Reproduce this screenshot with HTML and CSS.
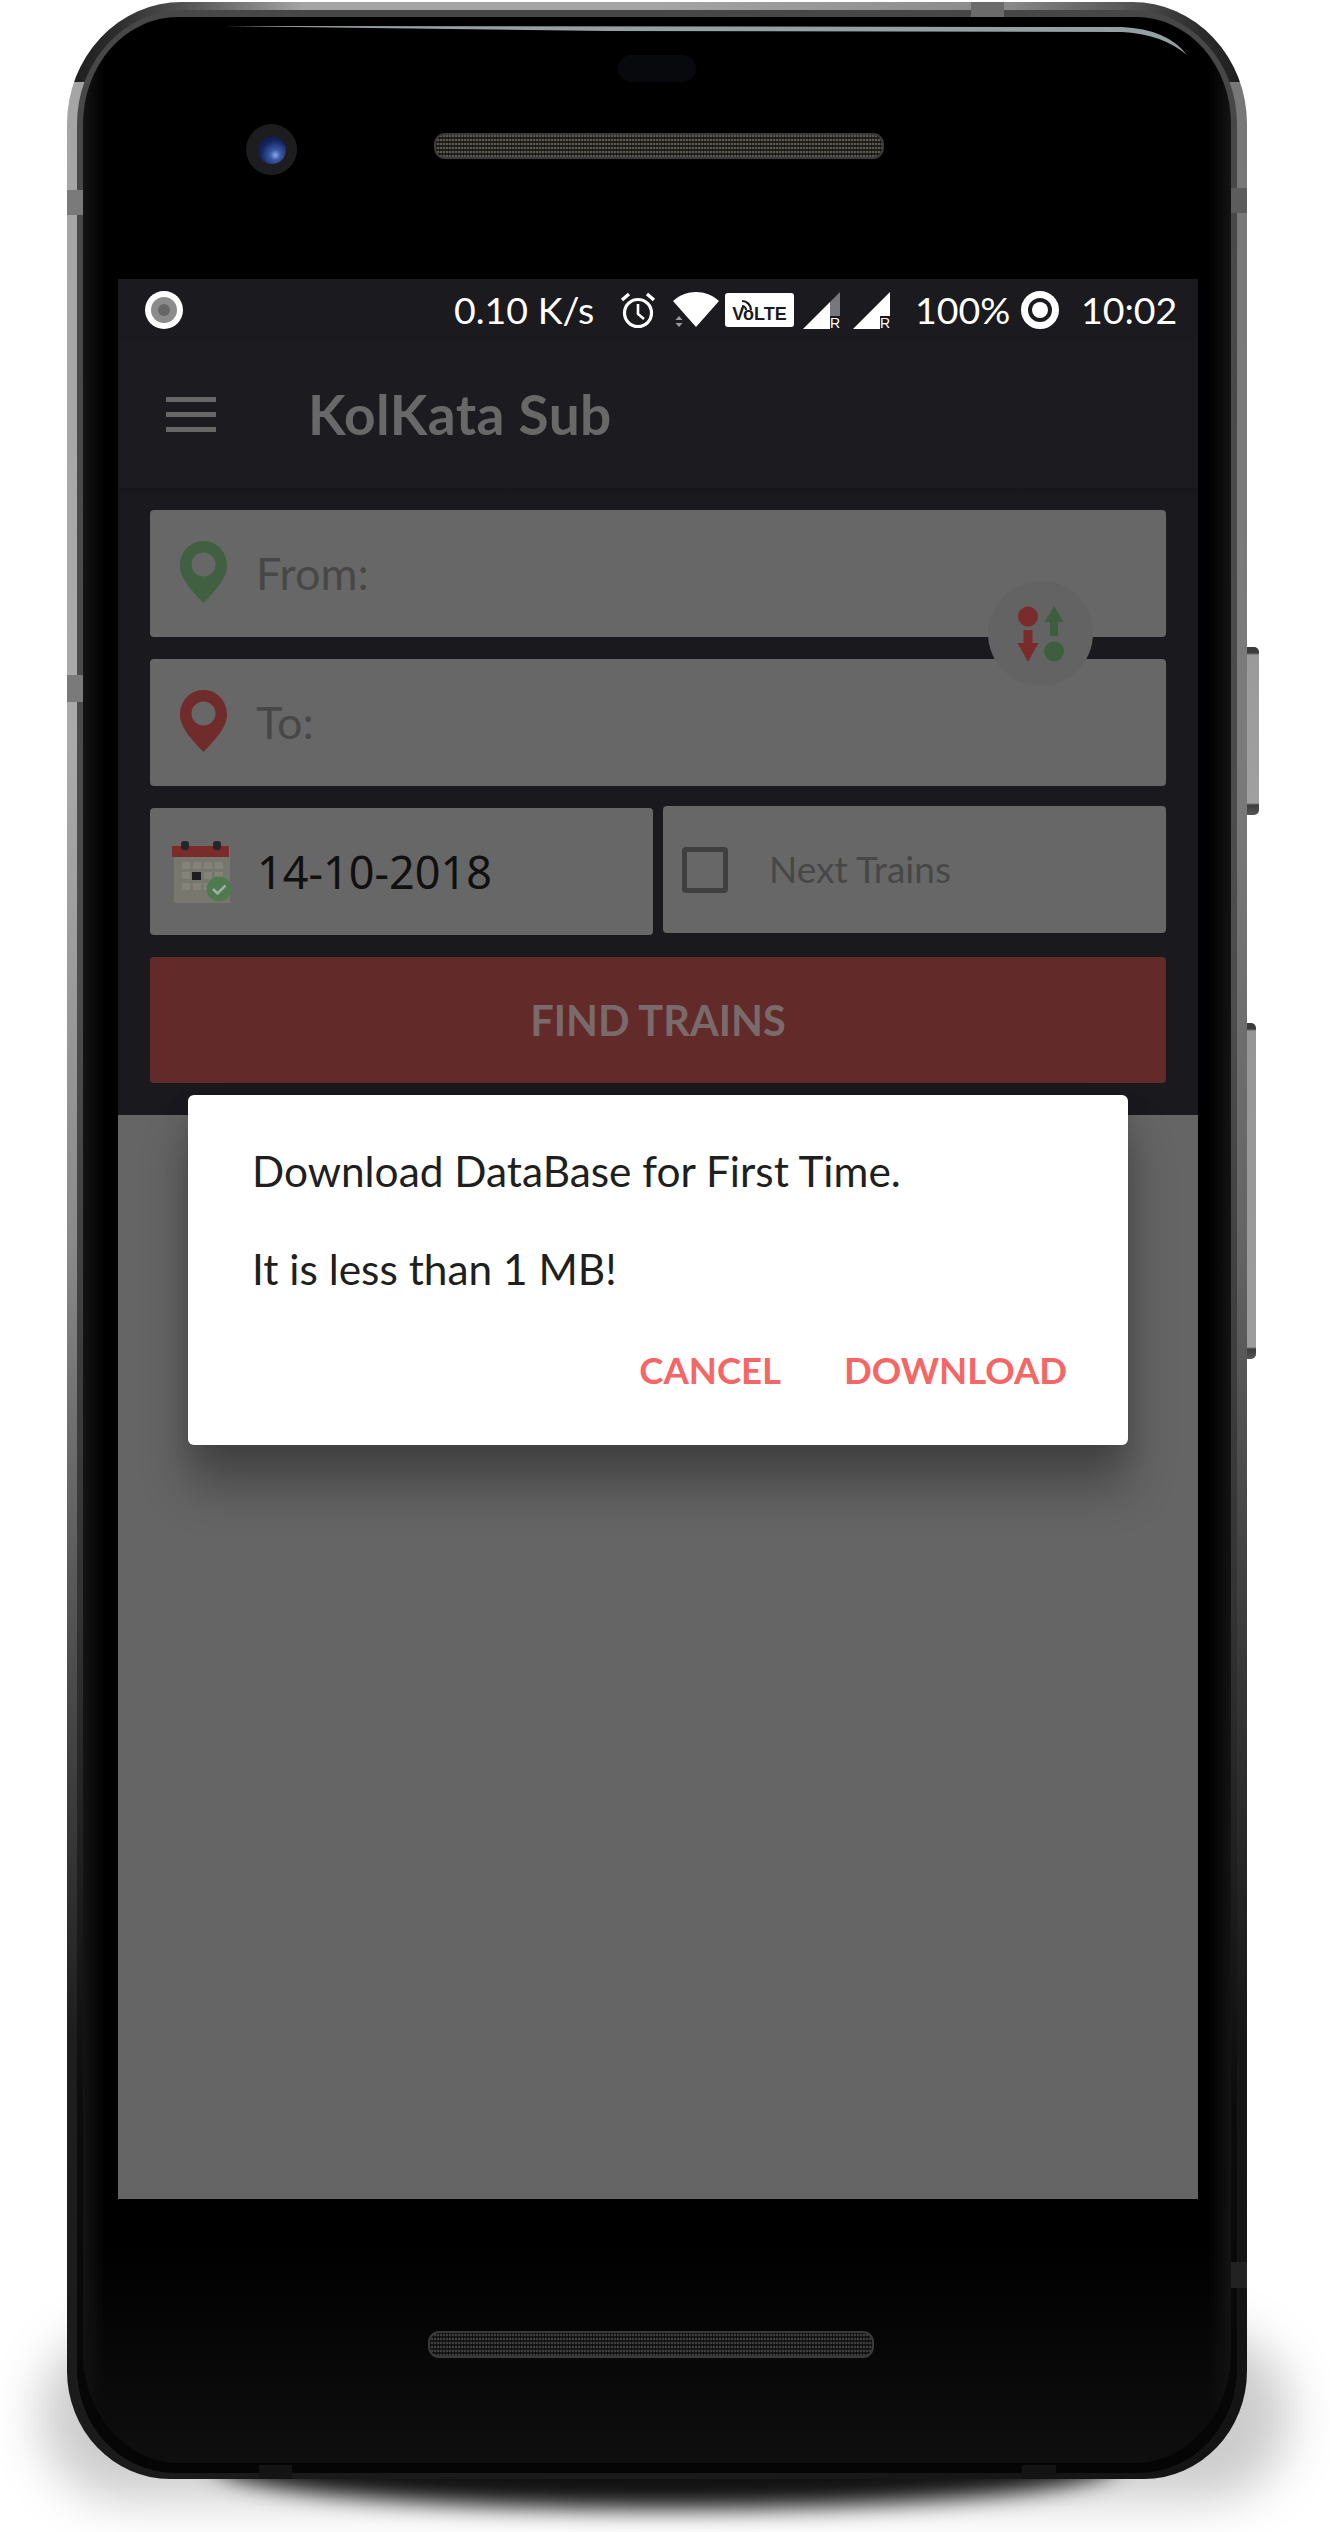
FILE: index.html
```html
<!DOCTYPE html>
<html lang="en">
<head>
<meta charset="utf-8">
<title>KolKata Sub</title>
<link rel="stylesheet" href="styles.css">
</head>
<body>
<div class="stage">
  <div class="halo"></div>
  <div class="floor-shadow"></div>
  <div class="side-key key-one"></div>
  <div class="side-key key-two"></div>
  <div class="phone">
    <div class="band">
      <div class="glass">
        <div class="top-bezel">
          <div class="sensor"></div>
          <div class="camera-row">
            <div class="camera"><div class="lens"></div></div>
            <div class="speaker speaker-top"></div>
          </div>
        </div>
        <div class="screen">
          <div class="status">
            <svg class="ico-record" viewBox="0 0 38 38"><circle cx="19" cy="19" r="19" fill="#fff"/><circle cx="19" cy="19" r="13" fill="#8b8b8b"/><circle cx="19" cy="19" r="6" fill="#666"/></svg>
            <span class="status-text speed">0.10 K/s</span>
            <svg class="ico-alarm" viewBox="0 0 36 37" fill="none" stroke="#fff"><circle cx="18" cy="21" r="13.5" stroke-width="3.2"/><path d="M18 12v10l6 5" stroke-width="2.6"/><path d="M2 8 9 2M34 8 27 2" stroke-width="3.4"/></svg>
            <svg class="ico-wifi" viewBox="0 0 46 36"><path d="M0 9C13-3 33-3 46 9L23 35Z" fill="#fff"/><path d="M6 24l-3.500 4h7ZM6 35l-3.500-4h7Z" fill="#9a9a9f"/></svg>
            <div class="volte">
              <span class="volte-text">VoLTE</span>
              <svg class="volte-waves" viewBox="0 0 14 14"><path d="M2 9a4 4 0 0 1 4 4M2 4a9 9 0 0 1 9 9" fill="none" stroke="#1a1a1f" stroke-width="2.200"/></svg>
            </div>
            <div class="signal">
              <svg class="signal-shape" viewBox="0 0 37 37"><path d="M0 37 27 10V37Z" fill="#fff"/><path d="M27 10 37 0V24H27Z" fill="#77777d"/></svg>
              <span class="sig-r">R</span>
            </div>
            <div class="signal sig-two">
              <svg class="signal-shape" viewBox="0 0 37 37"><path d="M0 37 37 0V24H27V37Z" fill="#fff"/></svg>
              <span class="sig-r">R</span>
            </div>
            <span class="status-text battery">100%</span>
            <svg class="ico-ring" viewBox="0 0 38 38"><circle cx="19" cy="19" r="15.500" fill="none" stroke="#fff" stroke-width="7"/><circle cx="19" cy="19" r="8" fill="#fff"/></svg>
            <span class="status-text clock">10:02</span>
          </div>
          <div class="appbar">
            <div class="burger"><span></span><span></span><span></span></div>
            <div class="title">KolKata Sub</div>
          </div>
          <div class="form">
            <div class="field">
              <svg class="pin" viewBox="0 0 47 62"><path fill-rule="evenodd" d="M23.500 0C36 0 47 10 47 25 47 38 33 52 23.500 62 14 52 0 38 0 25 0 10 11 0 23.500 0ZM23.500 11.500a12 12 0 1 0 0 24 12 12 0 0 0 0-24Z" fill="#415f41"/></svg>
              <span class="field-label">From:</span>
            </div>
            <div class="field">
              <svg class="pin" viewBox="0 0 47 62"><path fill-rule="evenodd" d="M23.500 0C36 0 47 10 47 25 47 38 33 52 23.500 62 14 52 0 38 0 25 0 10 11 0 23.500 0ZM23.500 11.500a12 12 0 1 0 0 24 12 12 0 0 0 0-24Z" fill="#702b2b"/></svg>
              <span class="field-label">To:</span>
            </div>
            <div class="row">
              <div class="field date">
                <svg class="calendar" viewBox="0 0 60 62">
                  <rect x="2" y="6" width="56" height="56" fill="#77776d"/>
                  <rect y="5" width="57" height="11" fill="#7a2b2b"/>
                  <rect x="9" y="0" width="8" height="9" rx="3" fill="#26262a"/>
                  <rect x="41" y="0" width="8" height="9" rx="3" fill="#26262a"/>
                  <g fill="#83837a">
                    <rect x="10" y="21" width="8" height="7"/><rect x="21" y="21" width="8" height="7"/><rect x="32" y="21" width="8" height="7"/><rect x="43" y="21" width="8" height="7"/>
                    <rect x="10" y="31" width="8" height="7"/><rect x="32" y="31" width="8" height="7"/><rect x="43" y="31" width="8" height="7"/>
                    <rect x="10" y="42" width="8" height="7"/><rect x="21" y="42" width="8" height="7"/><rect x="32" y="42" width="8" height="7"/>
                  </g>
                  <rect x="20" y="31" width="9" height="8" fill="#1d1d20"/>
                  <circle cx="47" cy="48" r="12.500" fill="#4f7a50"/>
                  <path d="M41 48l4.500 4.500 8-8" fill="none" stroke="#9db09d" stroke-width="2.500"/>
                </svg>
                <span class="date-text">14-10-2018</span>
              </div>
              <div class="field next">
                <span class="check"></span>
                <span class="next-label">Next Trains</span>
              </div>
            </div>
            <div class="find">FIND TRAINS</div>
          </div>
          <div class="content"></div>
          <div class="swap">
            <svg viewBox="0 0 46 56">
              <circle cx="10" cy="10.500" r="10" fill="#7a2b2b"/>
              <path d="M5.500 24h9v13h6L10 56-.5 37h6Z" fill="#7a2b2b"/>
              <circle cx="36" cy="45.500" r="10" fill="#3d5f3d"/>
              <path d="M36 0l9.500 16H40v14h-8V16h-5.500Z" fill="#3d5f3d"/>
            </svg>
          </div>
          <div class="dialog">
            <p class="msg">Download DataBase for First Time.</p>
            <p class="msg msg-second">It is less than 1 MB!</p>
            <div class="actions"><span class="action">CANCEL</span><span class="action">DOWNLOAD</span></div>
          </div>
        </div>
        <div class="bottom-bezel"><div class="speaker speaker-low"></div></div>
      </div>
    </div>
    <svg class="glint" viewBox="0 0 1180 80"><path d="M158 24 1055 25Q1100 27 1120 53 1095 32 1055 30L540 29Z" fill="#95a1a1"/></svg>
    <div class="notch notch-top"></div>
    <div class="notch notch-l1"></div>
    <div class="notch notch-l2"></div>
    <div class="notch notch-r1"></div>
    <div class="notch notch-r2"></div>
    <div class="notch notch-b1"></div>
    <div class="notch notch-b2"></div>
  </div>
</div>
</body>
</html>
```
FILE: styles.css
```css
* { box-sizing: border-box; }
html, body { margin: 0; padding: 0; background: #fff; }
body { width: 1330px; height: 2532px; overflow: hidden; font-family: "Lato", "Liberation Sans", sans-serif; }

.stage { position: relative; width: 1330px; height: 2532px; padding: 2px 0 0 67px; }

.phone {
  position: relative;
  width: 1180px;
  height: 2477px;
  padding: 8px 10px 6px 10px;
  border-radius: 115px 115px 103px 103px / 122px 122px 108px 108px;
  background:
    linear-gradient(90deg, #1c1c1c 0, #2c2c2c 4%, #5a5a5a 11%, transparent 20%, transparent 80%, #5a5a5a 89%, #2c2c2c 96%, #1c1c1c 100%) 0 0 / 100% 80px no-repeat,
    linear-gradient(90deg, transparent 50%, rgba(0,0,0,.28) 100%),
    linear-gradient(180deg, #a4a4a4 0, #aaa 30%, #8a8a8a 50%, #4a4a4a 68%, #1e1e1e 82%, #1a1a1a 100%);
}
.band {
  height: 100%;
  padding: 7px 6px 10px 6px;
  border-radius: 106px 106px 98px 98px / 114px 114px 104px 104px;
  background: linear-gradient(180deg, #474747 0, #4d4d4d 40%, #333 65%, #0c0c0c 85%, #050505 100%);
}
.glass {
  height: 100%;
  display: flex;
  flex-direction: column;
  overflow: hidden;
  border-radius: 95px 95px 96px 96px / 107px 107px 110px 110px;
  background:
    linear-gradient(180deg, transparent 91%, rgba(16,16,16,.9) 100%),
    linear-gradient(90deg, #141414 0, #000 22px, #000 calc(100% - 22px), #141414 100%);
}

.top-bezel { height: 262px; flex: none; display: flex; flex-direction: column; align-items: center; padding-top: 38px; }
.sensor { width: 78px; height: 27px; border-radius: 14px; background: #07090c; }
.camera-row { display: flex; align-items: center; gap: 137px; width: 100%; margin-top: 42px; padding-left: 163px; }
.camera { width: 51px; height: 51px; border-radius: 50%; background: #1d1d20; display: flex; align-items: center; justify-content: center; }
.lens { width: 28px; height: 28px; border-radius: 50%; background: radial-gradient(circle at 62% 68%, #8fa8e0 0, #3a5aa8 20%, #16265c 55%, #0a0f22 100%); }
.speaker {
  width: 450px;
  height: 26px;
  border-radius: 11px;
  border: 2px solid #3b3a37;
  background:
    repeating-linear-gradient(90deg, rgba(0,0,0,.45) 0 1px, transparent 1px 3px),
    repeating-linear-gradient(0deg, #57554d 0 2px, #24231f 2px 4px);
}
.speaker-top { margin-bottom: 8px; }

.screen { position: relative; width: 1080px; height: 1920px; margin-left: 35px; flex: none; display: flex; flex-direction: column; }

.status { height: 62px; flex: none; background: #1a1a1f; display: flex; align-items: center; color: #fff; padding-left: 27px; }
.status-text { font-weight: 400; font-size: 37.500px; line-height: 1; white-space: nowrap; }
.ico-record { width: 38px; height: 38px; flex: none; }
.speed { margin-left: 271px; width: 142px; }
.ico-alarm { width: 36px; height: 37px; margin-left: 24px; flex: none; }
.ico-wifi { width: 46px; height: 36px; margin-left: 17px; flex: none; }
.volte { position: relative; width: 69px; height: 34px; margin-left: 6px; flex: none; background: #fff; border-radius: 3px; display: flex; align-items: flex-end; justify-content: center; }
.volte-text { font-family: "Liberation Sans", sans-serif; font-weight: 700; font-size: 18px; line-height: 25px; color: #1a1a1f; }
.volte-waves { position: absolute; left: 15px; top: 4px; width: 14px; height: 14px; }
.signal { position: relative; width: 37px; height: 37px; margin-left: 9px; flex: none; }
.signal-shape { width: 37px; height: 37px; display: block; }
.sig-two { margin-left: 13px; }
.sig-r { position: absolute; right: 0; bottom: 0; font-family: "Liberation Sans", sans-serif; font-size: 14px; line-height: 12px; color: #fff; }
.battery { margin-left: 25px; width: 93px; }
.ico-ring { width: 38px; height: 38px; margin-left: 13px; flex: none; }
.clock { margin-left: 22px; }

.appbar { height: 147px; flex: none; background: #1b1b20; display: flex; align-items: center; padding-left: 48px; }
.burger { width: 50px; display: flex; flex-direction: column; gap: 10px; }
.burger span { display: block; height: 5px; background: #676767; }
.title { margin-left: 92px; font-weight: 700; font-size: 55px; letter-spacing: .4px; line-height: 1; color: #686868; white-space: nowrap; }

.form { height: 627px; flex: none; background: linear-gradient(180deg, #17171b 0, #19191e 8px); padding: 22px 32px 0; display: flex; flex-direction: column; gap: 22px; }
.field { height: 127px; flex: none; background: #676767; border-radius: 4px; display: flex; align-items: center; padding-left: 30px; }
.pin { width: 47px; height: 62px; flex: none; margin-bottom: 3px; }
.field-label { margin-left: 29px; font-size: 45px; line-height: 1; color: #474747; }
.row { display: flex; gap: 10px; align-items: flex-start; height: 127px; flex: none; }
.date { width: 503px; padding-left: 22px; }
.calendar { width: 60px; height: 62px; flex: none; }
.date-text { margin-left: 25px; font-family: "Noto Sans", sans-serif; font-size: 45px; line-height: 1; color: #101010; }
.next { flex: 1; margin-top: -2px; padding-left: 19px; }
.check { width: 46px; height: 46px; border: 5px solid #3f3f3f; border-radius: 4px; flex: none; }
.next-label { margin-left: 41px; margin-bottom: 3px; font-size: 37px; line-height: 1; color: #474747; }
.find { height: 126px; flex: none; background: #632a2a; border-radius: 4px; display: flex; align-items: center; justify-content: center; font-weight: 700; font-size: 41.500px; color: #7a6b6b; }

.content { flex: 1; background: #656565; }

.swap { position: absolute; left: 870px; top: 302px; width: 105px; height: 105px; border-radius: 50%; background: #636363; display: flex; align-items: center; justify-content: center; }
.swap svg { width: 46px; height: 56px; overflow: visible; }

.dialog {
  position: absolute;
  left: 70px;
  top: 816px;
  width: 940px;
  height: 350px;
  background: #fff;
  border-radius: 6px;
  padding: 0 61px 0 64px;
  box-shadow: 0 42px 48px rgba(0,0,0,.3), 0 10px 26px rgba(0,0,0,.12);
  display: flex;
  flex-direction: column;
}
.msg { margin: 53px 0 0; font-size: 42.400px; line-height: 46px; color: #1f1f1f; white-space: nowrap; }
.msg-second { margin-top: 52px; }
.actions { display: flex; justify-content: flex-end; gap: 63px; margin-top: 55px; }
.action { font-weight: 700; font-size: 36.500px; line-height: 46px; color: #f56667; white-space: nowrap; }

.bottom-bezel { flex: 1; padding: 132px 0 0 345px; }
.speaker-low { width: 446px; height: 27px; border-color: #3a3a3a; background: repeating-linear-gradient(90deg, rgba(0,0,0,.5) 0 1px, transparent 1px 3px), repeating-linear-gradient(0deg, #3c3c3c 0 2px, #191919 2px 4px); }

.glint { position: absolute; left: 0; top: 0; width: 1180px; height: 80px; }

.notch { position: absolute; }
.notch-top { left: 904px; top: 0; width: 33px; height: 15px; background: #6b6b6b; }
.notch-l1 { left: 0; top: 188px; width: 16px; height: 25px; background: #7a7a7a; }
.notch-l2 { left: 0; top: 673px; width: 16px; height: 27px; background: #7a7a7a; }
.notch-r1 { right: 0; top: 186px; width: 16px; height: 25px; background: #5c5c5c; }
.notch-r2 { right: 0; top: 2260px; width: 16px; height: 26px; background: #222; }
.notch-b1 { left: 192px; bottom: 0; width: 33px; height: 14px; background: #141414; }
.notch-b2 { left: 955px; bottom: 0; width: 34px; height: 14px; background: #141414; }

.side-key { position: absolute; border-radius: 0 5px 5px 0; }
.key-one { left: 1246px; top: 647px; width: 13px; height: 168px; background: linear-gradient(180deg, #3c3c3c 0, #3c3c3c 6px, #9a9a9a 8px, #a0a0a0 calc(100% - 12px), #3c3c3c calc(100% - 10px), #555 100%); }
.key-two { left: 1246px; top: 1023px; width: 10px; height: 336px; background: linear-gradient(180deg, #3c3c3c 0, #3c3c3c 6px, #969696 8px, #9c9c9c calc(100% - 12px), #3c3c3c calc(100% - 10px), #555 100%); }

.halo { position: absolute; left: 40px; top: 2330px; width: 1250px; height: 170px; border-radius: 90px; background: rgba(0,0,0,.2); filter: blur(24px); }
.floor-shadow { position: absolute; left: 215px; top: 2420px; width: 900px; height: 88px; border-radius: 0 0 50% 50%; background: #111; filter: blur(11px); }
```
